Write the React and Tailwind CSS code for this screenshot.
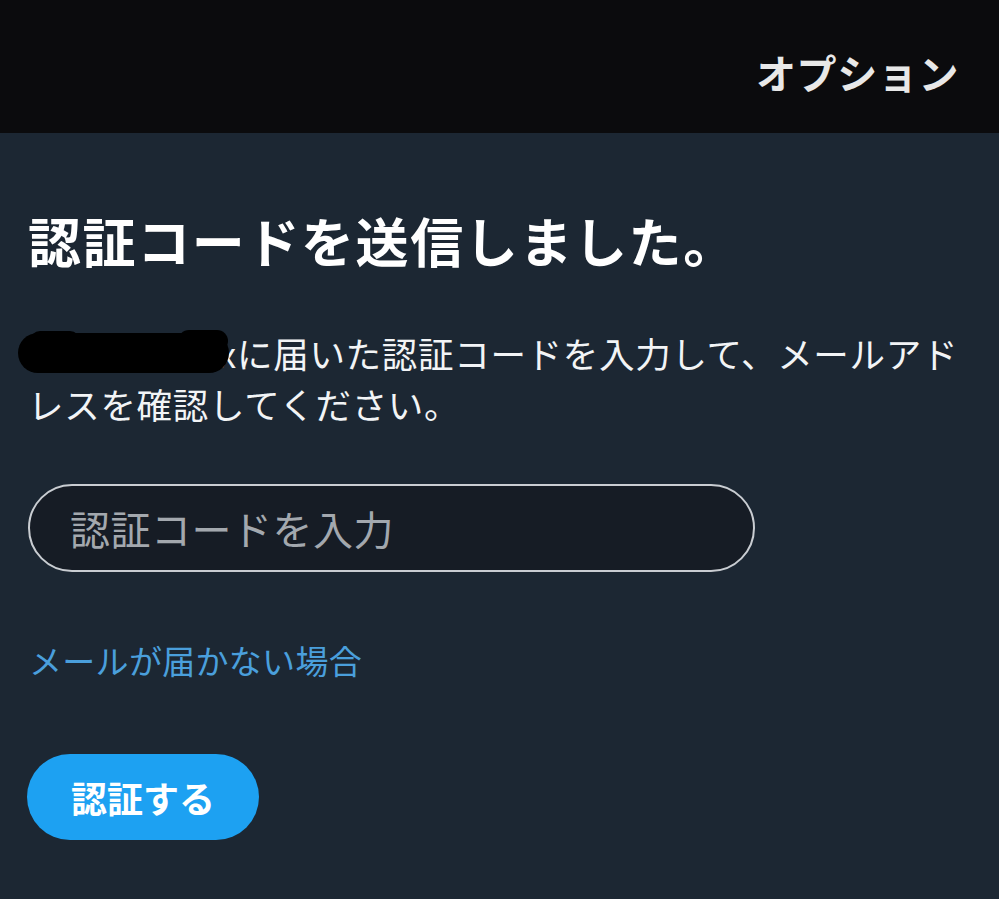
export default function App() {
  const font = { fontFamily: '"Noto Sans CJK JP", "Noto Sans", sans-serif' };
  return (
    <div className="w-[999px] h-[899px] bg-[#1c2733] flex flex-col overflow-hidden" style={font}>
      <header className="h-[133px] bg-[#0b0b0d] flex items-center justify-end pr-[40px] pt-[10px] shrink-0">
        <span className="text-[40px] leading-[48px] font-bold text-[#e8e8e8] tracking-[0.6px]">オプション</span>
      </header>
      <main className="flex flex-col items-start pl-[28px]">
        <h1 className="mt-[77px] text-[53px] leading-[60px] font-bold text-white whitespace-nowrap tracking-[1.6px]">
          認証コードを送信しました。
        </h1>
        <p className="mt-[57px] -ml-[10px] text-[35.5px] leading-[51px] text-[#f2f4f6] whitespace-nowrap tracking-[0.7px]">
          <span className="relative inline-block w-[219px] text-right align-baseline">
            <span>x</span>
            <span className="absolute left-[0px] top-[6px] w-[211px] h-[40px] bg-black rounded-[20px]" />
            <span className="absolute left-[12px] top-[4px] w-[50px] h-[20px] bg-black rounded-[12px]" />
            <span className="absolute left-[160px] top-[3px] w-[50px] h-[22px] bg-black rounded-[12px]" />
          </span>
          に届いた認証コードを入力して、メールアド
          <br />
          <span className="pl-[10px]">レスを確認してください。</span>
        </p>
        <div className="mt-[55px] w-[727px] h-[88px] rounded-full border-2 border-[#c9cdd2] bg-[#161c25] flex items-center pl-[40px]">
          <span className="text-[40px] leading-[48px] text-[#a3a8ae] tracking-[0.5px]">認証コードを入力</span>
        </div>
        <a className="mt-[64px] ml-[1px] text-[33px] leading-[48px] text-[#4a9fdc] whitespace-nowrap tracking-[0.3px]">
          メールが届かない場合
        </a>
        <button className="mt-[70px] -ml-[1px] w-[232px] h-[86px] rounded-full bg-[#1da1f2] flex items-center justify-center">
          <span className="text-[36px] leading-[44px] font-bold text-white">認証する</span>
        </button>
      </main>
    </div>
  );
}
